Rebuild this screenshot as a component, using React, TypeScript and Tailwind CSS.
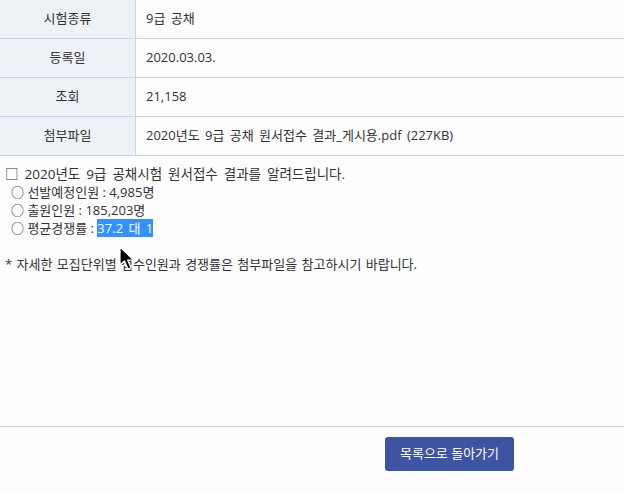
import React from "react";

const rows = [
  { label: "시험종류", value: "9급 공채" },
  { label: "등록일", value: "2020.03.03." },
  { label: "조회", value: "21,158" },
  { label: "첨부파일", value: "2020년도 9급 공채 원서접수 결과_게시용.pdf (227KB)" },
];

export default function App() {
  return (
    <div
      className="relative w-[624px] h-[494px] overflow-hidden bg-[#fdfdfe] text-[#333333] text-[13px] [word-spacing:2px]"
      style={{ fontFamily: '"Open Sans", "Noto Sans CJK KR", sans-serif' }}
    >
      <div className="flex flex-col">
        {rows.map((r) => (
          <div key={r.label} className="flex h-[39px] border-b border-[#c8d5e4]">
            <div className="w-[136px] shrink-0 border-r border-[#c8d5e4] bg-[#eef2f7] flex items-center justify-center">
              {r.label}
            </div>
            <div className="flex items-center pl-[10px]">{r.value}</div>
          </div>
        ))}
      </div>

      <div className="h-[271px] border-b border-[#c8d5e4] pt-[9px] pl-[5px] leading-[18px] whitespace-pre">
        <div className="text-[13.5px] [word-spacing:2.5px]">□ 2020년도 9급 공채시험 원서접수 결과를 알려드립니다.</div>
        <div className="pl-[6px] [word-spacing:0px]">○ 선발예정인원 : 4,985명</div>
        <div className="pl-[6px] [word-spacing:0px]">○ 출원인원 : 185,203명</div>
        <div className="pl-[6px] [word-spacing:0px]">
          {"○ 평균경쟁률 : "}
          <span className="bg-[#3390ff] text-white [word-spacing:2px]">37.2 대 1</span>
        </div>
        <div className="h-[18px]" />
        <div className="[word-spacing:1px]">* 자세한 모집단위별 접수인원과 경쟁률은 첨부파일을 참고하시기 바랍니다.</div>
      </div>

      <div className="flex pl-[385px] pt-[10px]">
        <button className="w-[129px] h-[34px] rounded-[3px] bg-[#3d54a3] text-white">
          목록으로 돌아가기
        </button>
      </div>

      <svg
        className="absolute left-[118px] top-[246px]"
        width="20"
        height="26"
        viewBox="0 0 20 26"
      >
        <path
          d="M2 1 L2 19 L6.5 15 L10 23 L13 21.8 L9.6 14 L15.5 14 Z"
          fill="#000"
          stroke="#fff"
          strokeWidth="1.2"
          strokeLinejoin="round"
        />
      </svg>
    </div>
  );
}
